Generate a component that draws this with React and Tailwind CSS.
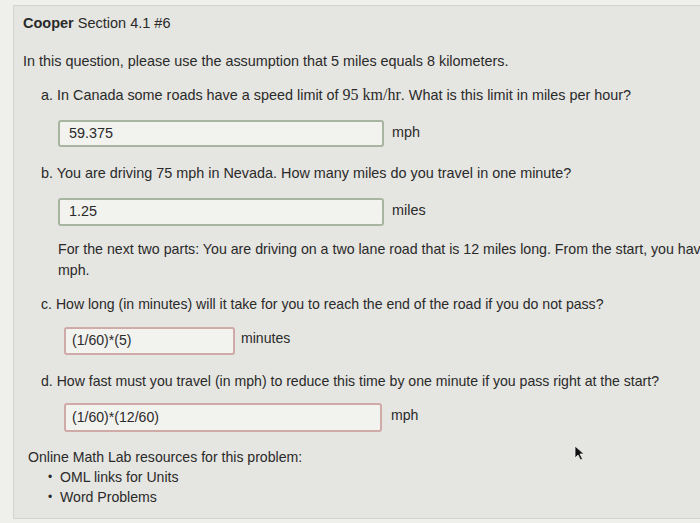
export default function App() {
  const sans = { fontFamily: '"Liberation Sans", Arial, sans-serif' };
  return (
    <div className="w-[700px] h-[523px] bg-[#efefec] overflow-hidden relative" style={sans}>
      <div className="absolute left-[13px] top-[5px] w-[700px] h-[514px] bg-[#e5e5e1] border border-[#d3d3cf] overflow-hidden text-[#2a2a2a] text-[14.4px]">
        <div className="pl-[9px] pt-[8px]">
          <div className="text-[14.5px] leading-[18px]"><span className="font-bold">Cooper</span> Section 4.1 #6</div>
          <div className="mt-[20px] leading-[18px]">In this question, please use the assumption that 5 miles equals 8 kilometers.</div>
          <div className="pl-[18px] mt-[16px]">
            <div className="leading-[18px]">
              a. In Canada some roads have a speed limit of <span className="text-[16px]" style={{ fontFamily: '"Liberation Serif", serif' }}>95 km/hr</span>. What is this limit in miles per hour?
            </div>
            <div className="flex items-center mt-[16px] pl-[17px]">
              <div className="w-[326px] h-[27px] rounded-[3px] border-2 border-[#a8b5a0] bg-[#f2f2ef] flex items-center pl-[9px]">59.375</div>
              <span className="ml-[8px] -mt-[2px]">mph</span>
            </div>
            <div className="mt-[17px] leading-[18px]">b. You are driving 75 mph in Nevada. How many miles do you travel in one minute?</div>
            <div className="flex items-center mt-[16px] pl-[17px]">
              <div className="w-[326px] h-[28px] rounded-[3px] border-2 border-[#a8b5a0] bg-[#f2f2ef] flex items-center pl-[9px]">1.25</div>
              <span className="ml-[8px] -mt-[2px]">miles</span>
            </div>
            <div className="pl-[17px] mt-[13px] leading-[21px] text-[14.2px]">
              <div className="whitespace-nowrap">For the next two parts: You are driving on a two lane road that is 12 miles long. From the start, you have</div>
              <div>mph.</div>
            </div>
            <div className="mt-[14px] leading-[18px] text-[14.1px]">c. How long (in minutes) will it take for you to reach the end of the road if you do not pass?</div>
            <div className="flex items-center mt-[14px] pl-[23px] text-[14.1px]">
              <div className="w-[171px] h-[28px] rounded-[3px] border-2 border-[#d0a9a9] bg-[#f2f2ef] flex items-center pl-[6px]">(1/60)*(5)</div>
              <span className="ml-[6px] -mt-[4px]">minutes</span>
            </div>
            <div className="mt-[17px] leading-[18px] text-[14.1px]">d. How fast must you travel (in mph) to reduce this time by one minute if you pass right at the start?</div>
            <div className="flex items-center mt-[13px] pl-[23px] text-[14.1px]">
              <div className="w-[318px] h-[29px] rounded-[3px] border-2 border-[#d0a9a9] bg-[#f2f2ef] flex items-center pl-[6px]">(1/60)*(12/60)</div>
              <span className="ml-[9px] -mt-[4px]">mph</span>
            </div>
          </div>
          <div className="mt-[16px] pl-[5px] leading-[19px] text-[14.1px]">
            <div>Online Math Lab resources for this problem:</div>
            <ul className="mt-[1px] pl-[20px]">
              <li className="flex items-center"><span className="w-[12px] text-[12px]">•</span>OML links for Units</li>
              <li className="flex items-center mt-[1px]"><span className="w-[12px] text-[12px]">•</span>Word Problems</li>
            </ul>
          </div>
        </div>
        <svg className="absolute left-[560px] top-[439px]" width="12" height="16" viewBox="0 0 12 16">
          <path d="M1 1 L1 13 L4 10 L6.5 15 L8.5 14 L6 9 L10 9 Z" fill="#111" stroke="#eee" strokeWidth="0.8" />
        </svg>
      </div>
    </div>
  );
}
